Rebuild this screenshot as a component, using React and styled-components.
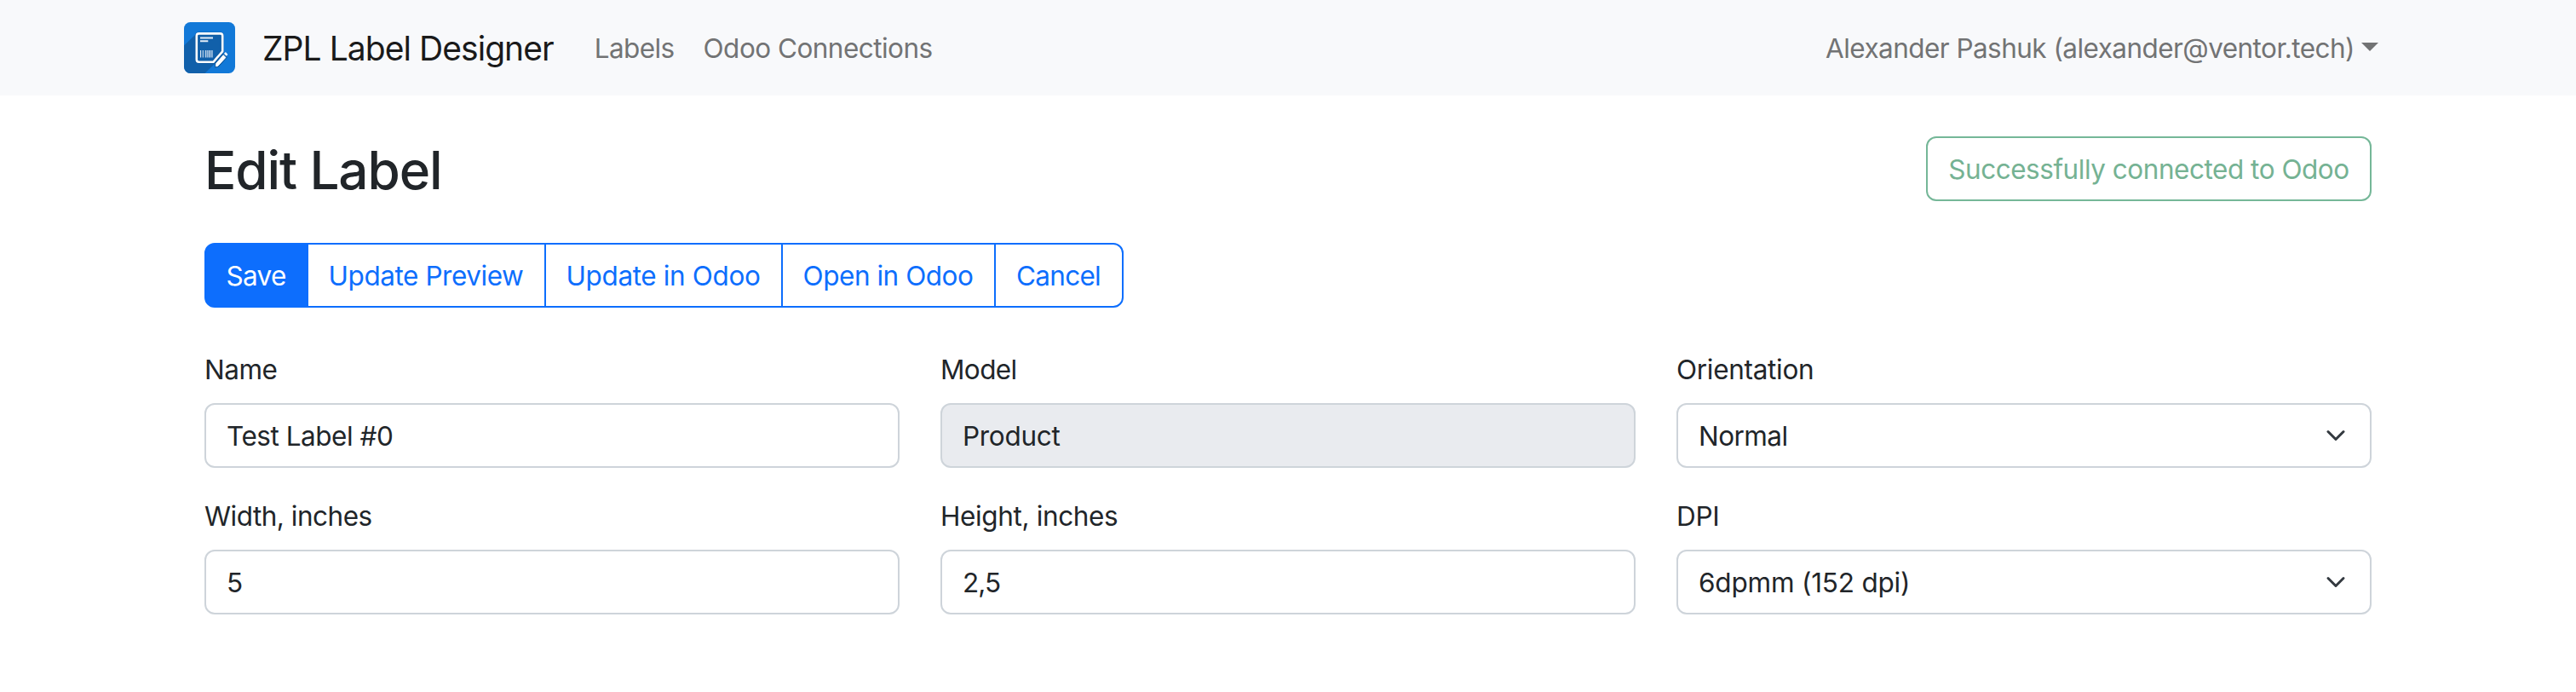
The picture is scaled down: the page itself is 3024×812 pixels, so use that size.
import React from "react";
import styled, { createGlobalStyle, css } from "styled-components";

const GlobalStyle = createGlobalStyle`
  *, *::before, *::after { box-sizing: border-box; }
  body {
    margin: 0;
    background: #fff;
    color: #212529;
    font-family: Inter, "Liberation Sans", sans-serif;
    font-size: 31.5px;
    line-height: 48px;
  }
`;

const tracking = css`
  letter-spacing: ${({ $tracking = 0 }) => $tracking}px;
`;

const Navbar = styled.nav`
  height: 112px;
  background: #f8f9fb;
`;

const NavbarInner = styled.div`
  display: flex;
  align-items: center;
  width: 2640px;
  height: 100%;
  margin: 0 auto;
  padding: 0 40px 0 24px;
`;

const Brand = styled.a`
  display: flex;
  align-items: center;
  gap: 32px;
  margin-right: 48px;
  color: #1a1a1a;
  font-size: 39px;
  line-height: 60px;
  white-space: nowrap;
  ${tracking}
`;

const BrandName = styled.span`
  padding-top: 1px;
`;

const LogoImage = styled.svg`
  display: block;
  width: 60px;
  height: 60px;
`;

const NavLinks = styled.div`
  display: flex;
  gap: 34px;
`;

const NavLink = styled.a`
  padding-top: 1px;
  color: #727374;
  white-space: nowrap;
  ${tracking}
`;

const UserMenu = styled.div`
  display: flex;
  align-items: center;
  gap: 8px;
  margin-left: auto;
`;

const Caret = styled.span`
  margin-bottom: 2px;
  border-top: 10px solid #727374;
  border-left: 10px solid transparent;
  border-right: 10px solid transparent;
`;

const Page = styled.main`
  width: 2544px;
  margin: 0 auto;
  padding-top: 48px;
`;

const PageHeader = styled.header`
  display: flex;
  align-items: flex-start;
  justify-content: space-between;
  height: 77px;
  margin-bottom: 48px;
`;

const Title = styled.h1`
  margin: 0;
  padding-top: 1px;
  font-size: 62px;
  font-weight: 500;
  line-height: 77px;
  ${tracking}
`;

const StatusBadge = styled.div`
  display: flex;
  align-items: center;
  justify-content: center;
  width: 523px;
  height: 76px;
  padding-top: 2px;
  border: 2px solid #75b798;
  border-radius: 12px;
  color: #75b293;
  white-space: nowrap;
  ${tracking}
`;

const ButtonGroup = styled.div`
  display: inline-flex;
  vertical-align: top;
  margin-bottom: 48px;
`;

const Button = styled.button`
  width: ${({ $width }) => $width}px;
  height: 76px;
  padding: 2px 1px 0 0;
  border: 2px solid #0d6efd;
  background: ${({ $active }) => ($active ? "#0d6efd" : "#fff")};
  color: ${({ $active }) => ($active ? "#fff" : "#0d6efd")};
  font: inherit;
  white-space: nowrap;
  ${tracking}

  & + & { margin-left: -2px; }
  &:first-child { border-radius: 12px 0 0 12px; }
  &:last-child { border-radius: 0 12px 12px 0; }
`;

const FormGrid = styled.form`
  display: grid;
  grid-template-columns: repeat(3, 816px);
  gap: 32px 48px;
`;

const Field = styled.div`
  display: flex;
  flex-direction: column;
  gap: 16px;
`;

const Label = styled.label`
  height: 48px;
  padding-top: 1px;
  ${tracking}
`;

const controlStyle = css`
  display: block;
  width: 100%;
  height: 76px;
  margin: 0;
  padding: 0 24px;
  border: 2px solid #ced4da;
  border-radius: 12px;
  outline: 0;
  background: #fff;
  color: #212529;
  font: inherit;
  opacity: 1;
  appearance: none;
  ${tracking}
`;

const Input = styled.input`
  ${controlStyle}
  &:disabled { background: #e9ebef; }
`;

const Select = styled.select`
  ${controlStyle}
  padding-top: 2px;
`;

const SelectWrap = styled.div`
  position: relative;
`;

const Chevron = styled.svg`
  position: absolute;
  top: 26px;
  right: 28px;
  width: 28px;
  height: 24px;
  pointer-events: none;
`;

function Logo() {
  return (
    <LogoImage viewBox="0 0 60 60" aria-hidden="true">
      <defs>
        <clipPath id="logo-tile">
          <rect width="60" height="60" rx="7.5" />
        </clipPath>
      </defs>
      <g clipPath="url(#logo-tile)">
        <rect width="60" height="60" fill="#1279d8" />
        <path d="M14.5 13.5 0 27.5V60H24.5L38 47 46 36V13.5Z" fill="#1160aa" />
        <path d="M17.5 13.4H42.6Q45.2 13.4 45.2 16V34.3L34.4 46.8H17.5Q14.8 46.8 14.8 44.1V16Q14.8 13.4 17.5 13.4Z" fill="none" stroke="#0b4f91" strokeOpacity=".45" strokeWidth="3.8" />
        <path d="M17.5 13.4H42.6Q45.2 13.4 45.2 16V34.3L34.4 46.8H17.5Q14.8 46.8 14.8 44.1V16Q14.8 13.4 17.5 13.4Z" fill="none" stroke="#fff" strokeWidth="2.6" strokeLinejoin="round" />
        <path d="M19 18.5H34M19 22.2H28.3" stroke="#e4edf7" strokeWidth="1.9" />
        <path d="M19.6 33V41.5M29.2 33V41.5M33 33V41.5" stroke="#e4edf7" strokeWidth="1.1" />
        <path d="M22.3 33V41.5M25.3 33V41.5M27.2 33V41.5M31 33V41.5" stroke="#c5d8eb" strokeWidth="1.2" />
        <path d="M46.4 38.2 49.5 41.2 40.2 51.5 37.1 52.3 37.2 48.7Z" fill="#fff" stroke="#115da5" strokeWidth="2.2" />
        <path d="M46.2 38.8 48.9 41.4 39.9 51.2 37.6 51.8 37.8 48.4Z" fill="#fff" stroke="#fff" strokeWidth="1" strokeLinejoin="round" />
        <path d="M47.9 37 48.8 36.1 50.6 37.9 49.8 38.8Z" fill="#fff" stroke="#fff" strokeWidth="1.4" strokeLinejoin="round" />
      </g>
    </LogoImage>
  );
}

function SelectField({ label, labelTracking, value, valueTracking }) {
  return (
    <Field>
      <Label $tracking={labelTracking}>{label}</Label>
      <SelectWrap>
        <Select $tracking={valueTracking} defaultValue={value} aria-label={label}>
          <option>{value}</option>
        </Select>
        <Chevron viewBox="0 0 28 24" aria-hidden="true">
          <path d="m5 7.5 9 9 9-9" fill="none" stroke="#343a40" strokeWidth="3" strokeLinecap="round" strokeLinejoin="round" />
        </Chevron>
      </SelectWrap>
    </Field>
  );
}

function TextField({ label, labelTracking, value, valueTracking, disabled }) {
  return (
    <Field>
      <Label $tracking={labelTracking}>{label}</Label>
      <Input $tracking={valueTracking} defaultValue={value} disabled={disabled} aria-label={label} />
    </Field>
  );
}

export default function App() {
  return (
    <>
      <GlobalStyle />
      <Navbar>
        <NavbarInner>
          <Brand $tracking={-0.944}>
            <Logo />
            <BrandName>ZPL Label Designer</BrandName>
          </Brand>
          <NavLinks>
            <NavLink $tracking={-0.6}>Labels</NavLink>
            <NavLink $tracking={-0.53}>Odoo Connections</NavLink>
          </NavLinks>
          <UserMenu>
            <NavLink $tracking={-0.551}>Alexander Pashuk (alexander@ventor.tech)</NavLink>
            <Caret />
          </UserMenu>
        </NavbarInner>
      </Navbar>
      <Page>
        <PageHeader>
          <Title $tracking={-1.108}>Edit Label</Title>
          <StatusBadge $tracking={-0.472}>Successfully connected to Odoo</StatusBadge>
        </PageHeader>
        <ButtonGroup>
          <Button type="button" $width={122} $active $tracking={-0.675}>Save</Button>
          <Button type="button" $width={281} $tracking={-0.44}>Update Preview</Button>
          <Button type="button" $width={280} $tracking={-0.37}>Update in Odoo</Button>
          <Button type="button" $width={252} $tracking={-0.461}>Open in Odoo</Button>
          <Button type="button" $width={152} $tracking={-0.734}>Cancel</Button>
        </ButtonGroup>
        <FormGrid>
          <TextField label="Name" labelTracking={-0.5} value="Test Label #0" valueTracking={-0.468} />
          <TextField label="Model" labelTracking={-0.6} value="Product" valueTracking={-0.292} disabled />
          <SelectField label="Orientation" labelTracking={-0.301} value="Normal" valueTracking={-0.55} />
          <TextField label="Width, inches" labelTracking={-0.5} value="5" valueTracking={0} />
          <TextField label="Height, inches" labelTracking={-0.37} value="2,5" valueTracking={-0.92} />
          <SelectField label="DPI" labelTracking={-0.3} value="6dpmm (152 dpi)" valueTracking={-0.206} />
        </FormGrid>
      </Page>
    </>
  );
}
